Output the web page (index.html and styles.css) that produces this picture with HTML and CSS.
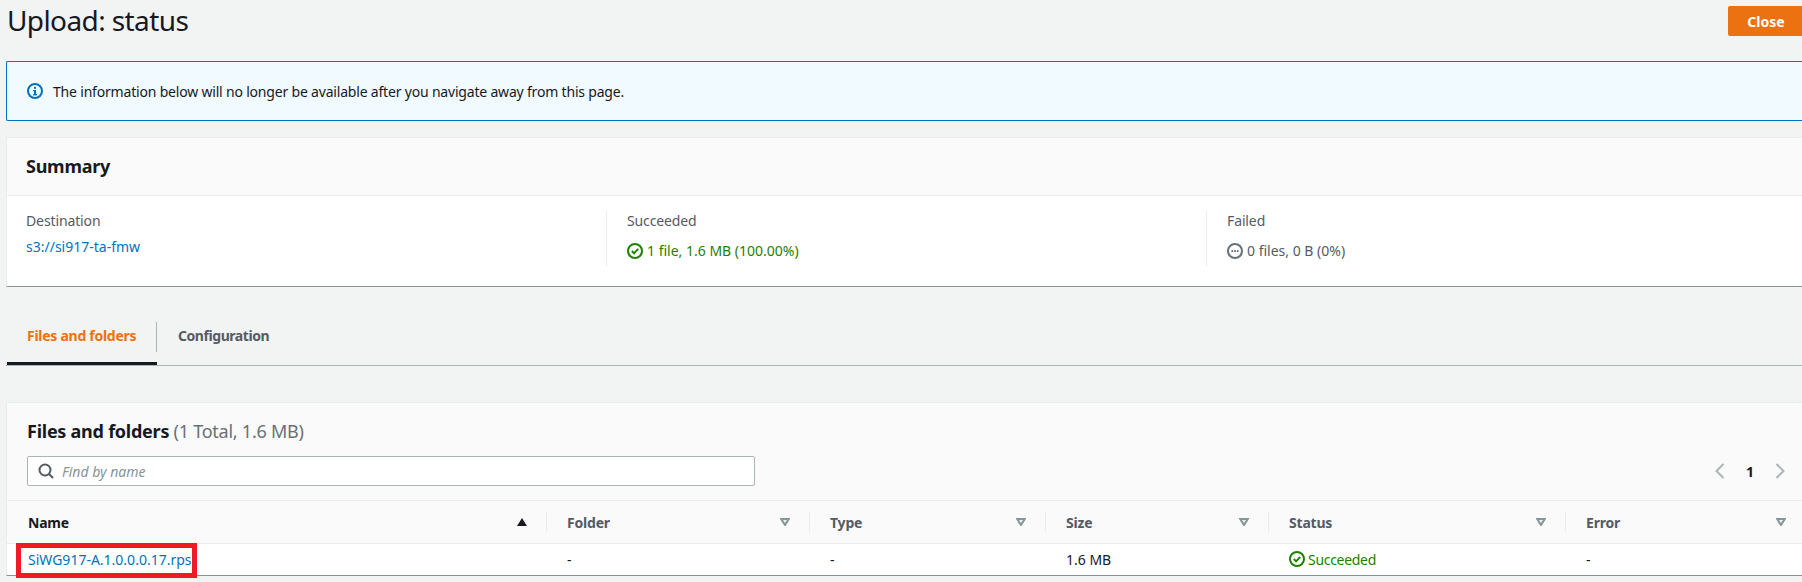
FILE: index.html
```html
<!DOCTYPE html>
<html lang="en">
<head>
    <meta charset="UTF-8">
    <title>Upload: status</title>
    <link rel="stylesheet" href="styles.css">
</head>
<body>
    <div class="page">
        <div class="title-row">
            <h1>Upload: status</h1>
            <button class="close-btn" type="button">Close</button>
        </div>

        <div class="banner">
            <svg class="icon" viewBox="0 0 16 16"><circle cx="8" cy="8" r="7" fill="none" stroke="#0073bb" stroke-width="2"/><rect x="7" y="7" width="2" height="5" fill="#0073bb"/><rect x="6" y="11" width="4" height="1.4" fill="#0073bb"/><rect x="6" y="7" width="2" height="1.2" fill="#0073bb"/><rect x="7" y="3.8" width="2" height="2" fill="#0073bb"/></svg>
            <span>The information below will no longer be available after you navigate away from this page.</span>
        </div>

        <section class="card summary">
            <div class="card-head"><h2>Summary</h2></div>
            <div class="summary-cols">
                <div class="summary-col">
                    <div class="label">Destination</div>
                    <a class="link dest" href="#">s3://si917-ta-fmw</a>
                </div>
                <div class="summary-col">
                    <div class="label">Succeeded</div>
                    <div class="value green">
                        <svg class="icon" viewBox="0 0 16 16"><circle cx="8" cy="8" r="7" fill="none" stroke="#1d8102" stroke-width="2"/><path d="M4.8 8l2.3 2.4 4.1-4.6" fill="none" stroke="#1d8102" stroke-width="2"/></svg>
                        <span>1 file, 1.6 MB (100.00%)</span>
                    </div>
                </div>
                <div class="summary-col">
                    <div class="label">Failed</div>
                    <div class="value grey">
                        <svg class="icon" viewBox="0 0 16 16"><circle cx="8" cy="8" r="7" fill="none" stroke="#687078" stroke-width="2"/><rect x="4.4" y="7.2" width="1.7" height="1.7" fill="#545b64"/><rect x="7.15" y="7.2" width="1.7" height="1.7" fill="#545b64"/><rect x="9.9" y="7.2" width="1.7" height="1.7" fill="#545b64"/></svg>
                        <span>0 files, 0 B (0%)</span>
                    </div>
                </div>
            </div>
        </section>

        <div class="tabs">
            <a class="tab active" href="#">Files and folders</a>
            <a class="tab" href="#">Configuration</a>
        </div>

        <section class="card files">
            <div class="files-head">
                <h2>Files and folders <span class="count">(1 Total, 1.6 MB)</span></h2>
                <div class="files-tools">
                    <div class="search">
                        <svg class="icon" viewBox="0 0 16 16"><circle cx="7" cy="7" r="5.5" fill="none" stroke="#545b64" stroke-width="2"/><path d="M11 11l4 4" stroke="#545b64" stroke-width="2"/></svg>
                        <span>Find by name</span>
                    </div>
                    <div class="pager">
                        <svg viewBox="0 0 10 16" class="chev"><path d="M8.5 1L1.5 8l7 7" fill="none" stroke="#aab7b8" stroke-width="2"/></svg>
                        <span>1</span>
                        <svg viewBox="0 0 10 16" class="chev"><path d="M1.5 1l7 7-7 7" fill="none" stroke="#aab7b8" stroke-width="2"/></svg>
                    </div>
                </div>
            </div>

            <div class="table">
                <div class="th th-name">Name<svg class="sort" viewBox="0 0 10 8"><path d="M5 0L10 8H0z" fill="#16191f"/></svg></div>
                <div class="th">Folder<svg class="sort" viewBox="0 0 10 8"><path d="M1.2 1h7.6L5 7z" fill="#eaeded" stroke="#879596" stroke-width="2"/></svg></div>
                <div class="th">Type<svg class="sort" viewBox="0 0 10 8"><path d="M1.2 1h7.6L5 7z" fill="#eaeded" stroke="#879596" stroke-width="2"/></svg></div>
                <div class="th">Size<svg class="sort" viewBox="0 0 10 8"><path d="M1.2 1h7.6L5 7z" fill="#eaeded" stroke="#879596" stroke-width="2"/></svg></div>
                <div class="th">Status<svg class="sort" viewBox="0 0 10 8"><path d="M1.2 1h7.6L5 7z" fill="#eaeded" stroke="#879596" stroke-width="2"/></svg></div>
                <div class="th th-last">Error<svg class="sort" viewBox="0 0 10 8"><path d="M1.2 1h7.6L5 7z" fill="#eaeded" stroke="#879596" stroke-width="2"/></svg></div>

                <div class="td td-name"><a class="link" href="#">SiWG917-A.1.0.0.0.17.rps</a><div class="red-box"></div></div>
                <div class="td">-</div>
                <div class="td">-</div>
                <div class="td">1.6 MB</div>
                <div class="td green td-status">
                    <svg class="icon" viewBox="0 0 16 16"><circle cx="8" cy="8" r="7" fill="none" stroke="#1d8102" stroke-width="2"/><path d="M4.8 8l2.3 2.4 4.1-4.6" fill="none" stroke="#1d8102" stroke-width="2"/></svg>
                    <span>Succeeded</span>
                </div>
                <div class="td">-</div>
            </div>
        </section>
    </div>
</body>
</html>
```

FILE: styles.css
```css
body {
    margin: 0;
    background-color: #f2f3f3;
    font-family: "Noto Sans", Arial, sans-serif;
    font-size: 14px;
    color: #16191f;
    overflow: hidden;
}

.page {
    height: 582px;
    padding-left: 6px;
    box-sizing: border-box;
}

.title-row {
    display: flex;
    justify-content: space-between;
    height: 61px;
    padding-top: 6px;
    box-sizing: border-box;
}

h1 {
    margin: -4px 0 0 1px;
    font-size: 28px;
    font-weight: 400;
    line-height: 36px;
    letter-spacing: -0.6px;
}

h2 {
    margin: 0;
    font-size: 18px;
    font-weight: 700;
    line-height: 24px;
    letter-spacing: -0.25px;
}

.close-btn {
    width: 74px;
    height: 30px;
    border: none;
    border-radius: 2px 0 0 2px;
    background-color: #ec7211;
    color: white;
    font: inherit;
    font-weight: 700;
    padding: 0 0 0 2px;
}

.icon {
    width: 16px;
    height: 16px;
    flex: none;
}

.banner {
    display: flex;
    align-items: center;
    gap: 10px;
    height: 60px;
    padding-left: 20px;
    margin-bottom: 16px;
    border: 1px solid #0073bb;
    border-right: none;
    border-radius: 2px 0 0 2px;
    background-color: #f1faff;
    box-sizing: border-box;
    letter-spacing: -0.19px;
}

.card {
    background: white;
    border-left: 1px solid #eaeded;
    border-top: 1px solid #eaeded;
    border-bottom: 1px solid #879596;
    box-sizing: border-box;
}

.summary {
    height: 150px;
}

.card-head {
    display: flex;
    align-items: center;
    height: 58px;
    padding: 0 0 2px 19px;
    background-color: #fafafa;
    border-bottom: 1px solid #eaeded;
    box-sizing: border-box;
}

.summary-cols {
    display: grid;
    grid-template-columns: 599px 600px 1fr;
    padding-top: 15px;
}

.summary-col {
    height: 55px;
    padding-left: 20px;
    border-left: 1px solid #eaeded;
    box-sizing: border-box;
}

.summary-col:first-child {
    padding-left: 19px;
    border-left: none;
}

.label {
    color: #545b64;
    line-height: 20px;
    letter-spacing: -0.12px;
}

.link {
    color: #0073bb;
    text-decoration: none;
}

.dest {
    display: block;
    margin-top: 6px;
    line-height: 20px;
}

.value {
    display: flex;
    align-items: center;
    gap: 4px;
    margin-top: 10px;
    line-height: 20px;
}

.green {
    color: #1d8102;
}

.grey {
    color: #545b64;
}

.tabs {
    display: flex;
    align-items: flex-start;
    height: 79px;
    padding-top: 32px;
    margin-bottom: 36px;
    border-bottom: 1px solid #aab7b8;
    box-sizing: border-box;
}

.tab {
    height: 46px;
    padding: 7px 20px 0 20px;
    box-sizing: border-box;
    color: #545b64;
    font-weight: 700;
    text-decoration: none;
    line-height: 20px;
    letter-spacing: -0.44px;
}

.tab.active {
    position: relative;
    width: 150px;
    margin-left: 1px;
    color: #ec7211;
    border-bottom: 3px solid #16191f;
    white-space: nowrap;
    letter-spacing: -0.27px;
}

.tab.active::after {
    content: "";
    position: absolute;
    right: 0;
    top: 3px;
    height: 30px;
    border-right: 1px solid #aab7b8;
}

.tab.active + .tab {
    padding-left: 21px;
}

.files {
    height: 174px;
}

.files-head {
    height: 98px;
    padding: 16px 0 0 20px;
    background-color: #fafafa;
    border-bottom: 1px solid #eaeded;
    box-sizing: border-box;
}

.count {
    color: #687078;
    font-weight: 400;
}

.files-tools {
    display: flex;
    justify-content: space-between;
    align-items: center;
    margin-top: 13px;
}

.search {
    display: flex;
    align-items: center;
    gap: 8px;
    width: 728px;
    height: 30px;
    padding-left: 10px;
    background: white;
    border: 1px solid #aab7b8;
    border-radius: 2px;
    box-sizing: border-box;
    color: #879596;
    font-style: italic;
}

.pager {
    display: flex;
    align-items: center;
    gap: 21px;
    margin-right: 17px;
    font-weight: 700;
}

.chev {
    width: 10px;
    height: 16px;
}

.table {
    display: grid;
    grid-template-columns: 539px 263px 236px 223px 297px 1fr;
}

.th {
    display: flex;
    align-items: center;
    justify-content: space-between;
    position: relative;
    height: 43px;
    padding: 0 19px 0 21px;
    background-color: #fafafa;
    border-bottom: 1px solid #eaeded;
    box-sizing: border-box;
    color: #545b64;
    font-weight: 700;
    letter-spacing: -0.2px;
}

.th + .th::before {
    content: "";
    position: absolute;
    left: 0;
    top: 11px;
    height: 21px;
    border-left: 1px solid #eaeded;
}

.th-name {
    color: #16191f;
}

.th-last {
    padding-right: 16px;
}

.sort {
    width: 10px;
    height: 8px;
}

.td {
    display: flex;
    align-items: center;
    gap: 3px;
    position: relative;
    height: 30px;
    padding-left: 21px;
    box-sizing: border-box;
}

.td-status {
    letter-spacing: -0.3px;
}

.td-name a {
    white-space: nowrap;
}

.red-box {
    position: absolute;
    left: 9px;
    top: -1px;
    width: 181px;
    height: 35px;
    border: 5px solid #ed1c24;
    box-sizing: border-box;
}
```
